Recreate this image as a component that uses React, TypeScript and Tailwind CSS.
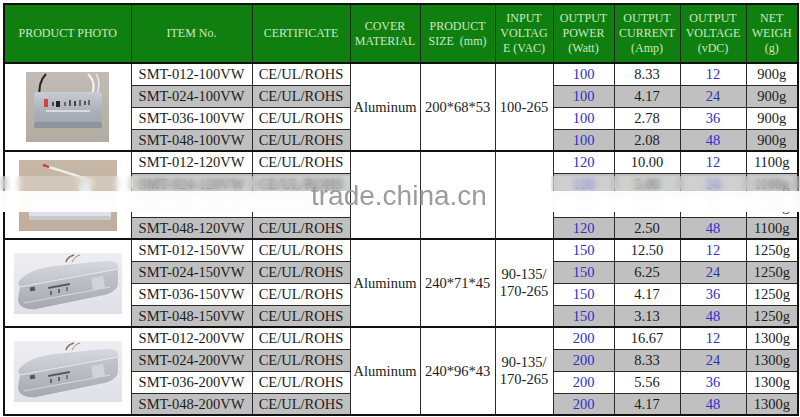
import React from "react";

type Group = {
  watt: string;
  cover: string;
  size: string;
  input: string[];
  currents: string[];
  weight: string;
  photo: React.ReactNode;
};

const volts = ["12", "24", "36", "48"];
const codes = ["012", "024", "036", "048"];

function Photo1() {
  return (
    <svg width="83" height="70" viewBox="0 0 83 70">
      <defs>
        <linearGradient id="bg1" x1="0" y1="0" x2="0" y2="1">
          <stop offset="0" stopColor="#c2bbb3" />
          <stop offset="1" stopColor="#b3aca3" />
        </linearGradient>
        <linearGradient id="box1" x1="0" y1="0" x2="0" y2="1">
          <stop offset="0" stopColor="#c9ccd3" />
          <stop offset="0.5" stopColor="#aeb2bb" />
          <stop offset="1" stopColor="#9da1aa" />
        </linearGradient>
      </defs>
      <rect width="83" height="70" fill="url(#bg1)" />
      <path d="M14 26 C12 14 16 6 20 2" stroke="#222" strokeWidth="2" fill="none" />
      <path d="M64 26 C70 16 68 8 62 2" stroke="#f2f2f2" strokeWidth="2.2" fill="none" />
      <path d="M68 28 C74 18 74 8 70 2" stroke="#e8e8e8" strokeWidth="1.6" fill="none" />
      <rect x="8" y="20" width="68" height="36" rx="3" fill="url(#box1)" />
      <rect x="8" y="50" width="68" height="6" rx="2" fill="#8f939c" />
      <rect x="18" y="27" width="4" height="8" fill="#c44" />
      <rect x="26" y="30" width="2" height="4" fill="#444" />
      <rect x="30" y="29" width="4" height="6" fill="#222" />
      <rect x="38" y="30" width="2" height="4" fill="#666" />
      <rect x="43" y="28" width="2" height="6" fill="#555" />
      <rect x="48" y="29" width="2" height="5" fill="#444" />
      <rect x="53" y="28" width="2" height="6" fill="#666" />
      <rect x="58" y="29" width="2" height="4" fill="#555" />
      <rect x="62" y="28" width="2" height="5" fill="#666" />
      <rect x="20" y="38" width="44" height="2" fill="#d8dade" />
    </svg>
  );
}

function Photo2() {
  return (
    <svg width="98" height="71" viewBox="0 0 98 71">
      <defs>
        <linearGradient id="bg2" x1="0" y1="0" x2="0" y2="1">
          <stop offset="0" stopColor="#c7b7a6" />
          <stop offset="1" stopColor="#bfae9d" />
        </linearGradient>
      </defs>
      <rect width="98" height="71" fill="url(#bg2)" />
      <path d="M26 6 C40 10 60 16 74 22" stroke="#ececec" strokeWidth="2.5" fill="none" />
      <path d="M24 5 L30 7" stroke="#c44" strokeWidth="2.5" />
      <rect x="60" y="22" width="12" height="16" fill="#e4e6ea" />
      <rect x="10" y="40" width="82" height="20" rx="3" fill="#dde1e8" />
      <rect x="10" y="56" width="82" height="4" rx="2" fill="#c4c8cf" />
    </svg>
  );
}

function Photo3({ id }: { id: string }) {
  return (
    <svg width="108" height="61" viewBox="0 0 108 61">
      <defs>
        <linearGradient id={`bg${id}`} x1="0" y1="0" x2="0" y2="1">
          <stop offset="0" stopColor="#eeeef2" />
          <stop offset="1" stopColor="#e0e1e6" />
        </linearGradient>
        <linearGradient id={`top${id}`} x1="0" y1="0" x2="0" y2="1">
          <stop offset="0" stopColor="#d6d8de" />
          <stop offset="1" stopColor="#bcc0c8" />
        </linearGradient>
        <linearGradient id={`fr${id}`} x1="0" y1="0" x2="0" y2="1">
          <stop offset="0" stopColor="#c4c7ce" />
          <stop offset="1" stopColor="#a5a9b1" />
        </linearGradient>
      </defs>
      <rect width="108" height="61" fill={`url(#bg${id})`} />
      <path d="M52 9 C53 5 56 3 60 2" stroke="#8a6a5a" strokeWidth="1.4" fill="none" />
      <path d="M58 9 C60 5 62 3 66 2" stroke="#9a8a7a" strokeWidth="1" fill="none" />
      <path d="M4 30 C8 22 20 16 40 13 L92 8 C100 8 104 10 104 14 L104 16 L6 34 Z" fill={`url(#top${id})`} />
      <path d="M6 34 L104 16 L104 30 C104 36 98 40 90 42 L22 56 C12 57 4 54 4 46 Z" fill={`url(#fr${id})`} />
      <path d="M6 34 L104 16" stroke="#e6e7ea" strokeWidth="1" />
      <rect x="16" y="34" width="5" height="4" fill="#555" transform="rotate(-10 18 36)" />
      <rect x="34" y="32" width="22" height="2" fill="#5a5a5a" transform="rotate(-10 45 33)" />
      <rect x="36" y="38" width="2" height="4" fill="#666" />
      <rect x="44" y="36" width="2" height="4" fill="#666" />
      <rect x="52" y="34" width="2" height="4" fill="#777" />
      <rect x="78" y="24" width="12" height="12" fill="#d2d4d9" transform="rotate(-10 84 30)" />
      <path d="M10 50 L96 34" stroke="#d7d9de" strokeWidth="1" />
    </svg>
  );
}

const groups: Group[] = [
  {
    watt: "100",
    cover: "Aluminum",
    size: "200*68*53",
    input: ["100-265"],
    currents: ["8.33", "4.17", "2.78", "2.08"],
    weight: "900g",
    photo: <Photo1 />,
  },
  {
    watt: "120",
    cover: "",
    size: "",
    input: [],
    currents: ["10.00", "5.00", "3.33", "2.50"],
    weight: "1100g",
    photo: <Photo2 />,
  },
  {
    watt: "150",
    cover: "Aluminum",
    size: "240*71*45",
    input: ["90-135/", "170-265"],
    currents: ["12.50", "6.25", "4.17", "3.13"],
    weight: "1250g",
    photo: <Photo3 id="a" />,
  },
  {
    watt: "200",
    cover: "Aluminum",
    size: "240*96*43",
    input: ["90-135/", "170-265"],
    currents: ["16.67", "8.33", "5.56", "4.17"],
    weight: "1300g",
    photo: <Photo3 id="b" />,
  },
];

const headers: string[][] = [
  ["PRODUCT PHOTO"],
  ["ITEM No."],
  ["CERTIFICATE"],
  ["COVER", "MATERIAL"],
  ["PRODUCT", "SIZE  (mm)"],
  ["INPUT", "VOLTAG", "E (VAC)"],
  ["OUTPUT", "POWER", "(Watt)"],
  ["OUTPUT", "CURRENT", "(Amp)"],
  ["OUTPUT", "VOLTAGE", "(vDC)"],
  ["NET", "WEIGH", "(g)"],
];

const widths = [127, 121, 98, 70, 75, 58, 61, 66, 66, 52];

export default function App() {
  return (
    <div className="relative w-[800px] h-[417px] bg-white overflow-hidden font-['Liberation_Serif',serif] text-[#1c1c1c]">
      <div className="pt-[3px] pl-[3px]">
        <table className="table-fixed border-collapse border-2 border-[#111] text-[14.5px] leading-none">
          <colgroup>
            {widths.map((w, i) => (
              <col key={i} style={{ width: w }} />
            ))}
          </colgroup>
          <thead>
            <tr className="h-[59px] bg-[#0f800f]">
              {headers.map((h, i) => (
                <th
                  key={i}
                  className="border border-[#1b2a1b] p-0 text-center align-middle font-normal text-[12px] leading-[15px] text-[#cde8c4] whitespace-pre"
                >
                  {h.map((l, j) => (
                    <div key={j}>{l}</div>
                  ))}
                </th>
              ))}
            </tr>
          </thead>
          <tbody>
            {groups.map((g, gi) =>
              [0, 1, 2, 3].map((r) => {
                const gray = r % 2 === 1;
                const cell = `border border-[#2a2a2a] p-0 text-center align-middle ${
                  gray ? "bg-[#c0c0c0]" : "bg-white"
                }`;
                const top = r === 0 ? "border-t-2 border-t-[#111]" : "";
                return (
                  <tr key={`${gi}-${r}`} className="h-[22px]">
                    {r === 0 && (
                      <td rowSpan={4} className={`border border-[#2a2a2a] ${top} bg-white p-0 align-middle`}>
                        <div className="flex justify-center items-center">{g.photo}</div>
                      </td>
                    )}
                    <td className={`${cell} ${top}`}>{`SMT-${codes[r]}-${g.watt}VW`}</td>
                    <td className={`${cell} ${top}`}>CE/UL/ROHS</td>
                    {r === 0 && (
                      <>
                        <td rowSpan={4} className={`border border-[#2a2a2a] ${top} bg-white p-0 text-center align-middle`}>
                          {g.cover}
                        </td>
                        <td rowSpan={4} className={`border border-[#2a2a2a] ${top} bg-white p-0 text-center align-middle`}>
                          {g.size}
                        </td>
                        <td rowSpan={4} className={`border border-[#2a2a2a] ${top} bg-white p-0 text-center align-middle leading-[17px]`}>
                          {g.input.map((l, j) => (
                            <div key={j}>{l}</div>
                          ))}
                        </td>
                      </>
                    )}
                    <td className={`${cell} ${top} text-[#3030c8]`}>{g.watt}</td>
                    <td className={`${cell} ${top}`}>{g.currents[r]}</td>
                    <td className={`${cell} ${top} text-[#3030c8]`}>{volts[r]}</td>
                    <td className={`${cell} ${top}`}>{g.weight}</td>
                  </tr>
                );
              })
            )}
          </tbody>
        </table>
      </div>

      {/* watermark band */}
      <div className="absolute left-0 top-[176px] w-[350px] h-[36px] flex flex-col">
        <div className="h-[15px] backdrop-blur-[3px] bg-white/25" />
        <div className="h-[21px] backdrop-blur-[3px] bg-white/95" />
      </div>
      <div className="absolute left-[551px] top-[176px] w-[249px] h-[36px] flex flex-col">
        <div className="h-[15px] backdrop-blur-[3px] bg-white/25" />
        <div className="h-[21px] backdrop-blur-[3px] bg-white/95" />
      </div>
      <div className="absolute left-[311px] top-[180px] text-[28px] leading-[32px] font-['Liberation_Sans',sans-serif] text-[#9c9c9c]">
        trade.china.cn
      </div>
    </div>
  );
}
